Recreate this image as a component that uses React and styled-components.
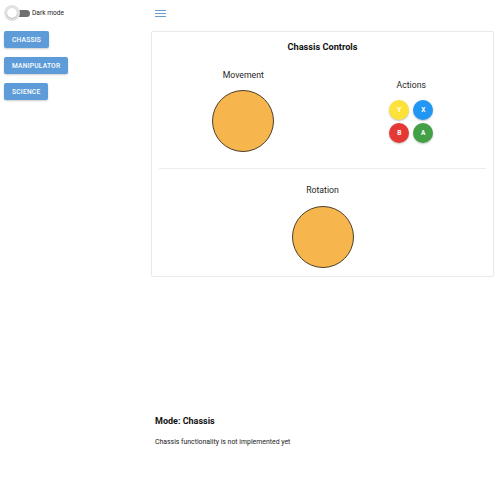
import React, { useState } from "react";
import styled, { createGlobalStyle } from "styled-components";

const GlobalStyle = createGlobalStyle`
  html, body {
    margin: 0;
    padding: 0;
    background: #ffffff;
    font-family: Roboto, "Liberation Sans", Arial, sans-serif;
    color: #1f1f1f;
  }
`;

const Page = styled.div`
  display: flex;
  width: 500px;
  min-height: 498px;
`;

const Sidebar = styled.aside`
  width: 150px;
  flex-shrink: 0;
  padding: 4px 4px;
  box-sizing: border-box;
  display: flex;
  flex-direction: column;
  align-items: flex-start;
`;

const ToggleRow = styled.label`
  display: flex;
  align-items: center;
  gap: 4px;
  height: 18px;
  margin-bottom: 9px;
  font-size: 6.6px;
  color: #222;
  cursor: pointer;
`;

const Switch = styled.span`
  position: relative;
  width: 24px;
  height: 18px;
  display: inline-block;
`;

const Track = styled.span`
  position: absolute;
  left: 7px;
  top: 5.5px;
  width: 19px;
  height: 7px;
  border-radius: 4px;
  background: ${(p) => (p.$on ? "#90caf9" : "#6f6f6f")};
`;

const Halo = styled.span`
  position: absolute;
  left: ${(p) => (p.$on ? "10px" : "0px")};
  top: 1px;
  width: 16px;
  height: 16px;
  border-radius: 50%;
  background: #e4e4e4;
`;

const Thumb = styled.span`
  position: absolute;
  left: ${(p) => (p.$on ? "13px" : "3px")};
  top: 4px;
  width: 10px;
  height: 10px;
  border-radius: 50%;
  background: ${(p) => (p.$on ? "#1976d2" : "#ffffff")};
  box-shadow: 0 0.5px 1.5px rgba(0, 0, 0, 0.3);
`;

const NavButton = styled.button`
  height: 17px;
  padding: 0 8px;
  margin-bottom: 9px;
  border: none;
  border-radius: 2px;
  background: #5d9cd8;
  color: #ffffff;
  font-family: Roboto, "Liberation Sans", Arial, sans-serif;
  font-weight: 500;
  font-size: 6.7px;
  letter-spacing: 0.2px;
  text-transform: uppercase;
  box-shadow: 0 1px 2px rgba(0, 0, 0, 0.2);
  cursor: pointer;
`;

const Main = styled.main`
  flex: 1;
  padding: 0 6px 0 1px;
  display: flex;
  flex-direction: column;
`;

const MenuButton = styled.button`
  width: 20px;
  height: 27px;
  margin-left: 4px;
  padding: 0;
  border: none;
  background: none;
  display: flex;
  align-items: center;
  cursor: pointer;
`;

const Card = styled.section`
  margin-top: 4px;
  border: 1px solid #e9e9e9;
  border-radius: 2px;
  background: #fff;
  padding: 9px 0 8px;
  display: flex;
  flex-direction: column;
`;

const CardTitle = styled.h2`
  margin: 0;
  text-align: center;
  font-size: 9.2px;
  font-weight: 700;
  line-height: 11px;
  color: #111;
`;

const Controls = styled.div`
  display: grid;
  grid-template-columns: 1fr 1fr;
  align-items: center;
  padding-left: 8px;
  margin-top: 18px;
`;

const Column = styled.div`
  display: flex;
  flex-direction: column;
  align-items: center;
  padding-left: ${(p) => p.$shift || 0}px;
`;

const Label = styled.div`
  font-size: 8.7px;
  line-height: 10.4px;
  color: #1f1f1f;
  margin-bottom: 10px;
`;

const Stick = styled.div`
  width: 62px;
  height: 62px;
  border-radius: 50%;
  box-sizing: border-box;
  background: #f7b54e;
  border: 1px solid #4f3f28;
`;

const ButtonGrid = styled.div`
  display: grid;
  grid-template-columns: 20px 20px;
  gap: 3px 4px;
`;

const ActionButton = styled.button`
  width: 20px;
  height: 20px;
  padding: 0;
  border: none;
  border-radius: 50%;
  background: ${(p) => p.$color};
  color: #fff;
  font-family: Roboto, "Liberation Sans", Arial, sans-serif;
  font-size: 6.5px;
  font-weight: 700;
  box-shadow: 0 1px 2px rgba(0, 0, 0, 0.25);
  cursor: pointer;
`;

const Divider = styled.hr`
  margin: 16px 7px 16px;
  border: none;
  border-top: 1px solid #ececec;
`;

const ModeSection = styled.div`
  margin-top: 139px;
  padding-left: 4px;
`;

const ModeTitle = styled.h3`
  margin: 0;
  font-size: 9px;
  line-height: 11px;
  font-weight: 700;
  color: #111;
`;

const ModeText = styled.p`
  margin: 11px 0 0;
  font-size: 6.9px;
  line-height: 8px;
  color: #222;
`;

const actions = [
  { key: "Y", color: "#fde23a" },
  { key: "X", color: "#2196f3" },
  { key: "B", color: "#e53935" },
  { key: "A", color: "#43a047" },
];

export default function App() {
  const [dark, setDark] = useState(false);
  const [mode, setMode] = useState("chassis");

  return (
    <>
      <GlobalStyle />
      <Page>
        <Sidebar>
          <ToggleRow onClick={() => setDark(!dark)}>
            <Switch>
              <Track $on={dark} />
              <Halo $on={dark} />
              <Thumb $on={dark} />
            </Switch>
            Dark mode
          </ToggleRow>
          {["chassis", "manipulator", "science"].map((m) => (
            <NavButton key={m} onClick={() => setMode(m)}>
              {m}
            </NavButton>
          ))}
        </Sidebar>
        <Main>
          <MenuButton aria-label="menu">
            <svg width="11" height="7" viewBox="0 0 11 7">
              <g stroke="#6a9dcc" strokeWidth="1">
                <line x1="0" y1="0.5" x2="11" y2="0.5" />
                <line x1="0" y1="3.5" x2="11" y2="3.5" />
                <line x1="0" y1="6.5" x2="11" y2="6.5" />
              </g>
            </svg>
          </MenuButton>
          <Card>
            <CardTitle>Chassis Controls</CardTitle>
            <Controls>
              <Column>
                <Label>Movement</Label>
                <Stick />
              </Column>
              <Column $shift={3}>
                <Label>Actions</Label>
                <ButtonGrid>
                  {actions.map((a) => (
                    <ActionButton key={a.key} $color={a.color}>
                      {a.key}
                    </ActionButton>
                  ))}
                </ButtonGrid>
              </Column>
            </Controls>
            <Divider />
            <Column>
              <Label>Rotation</Label>
              <Stick />
            </Column>
          </Card>
          <ModeSection>
            <ModeTitle>Mode: {mode.charAt(0).toUpperCase() + mode.slice(1)}</ModeTitle>
            <ModeText>Chassis functionality is not implemented yet</ModeText>
          </ModeSection>
        </Main>
      </Page>
    </>
  );
}
